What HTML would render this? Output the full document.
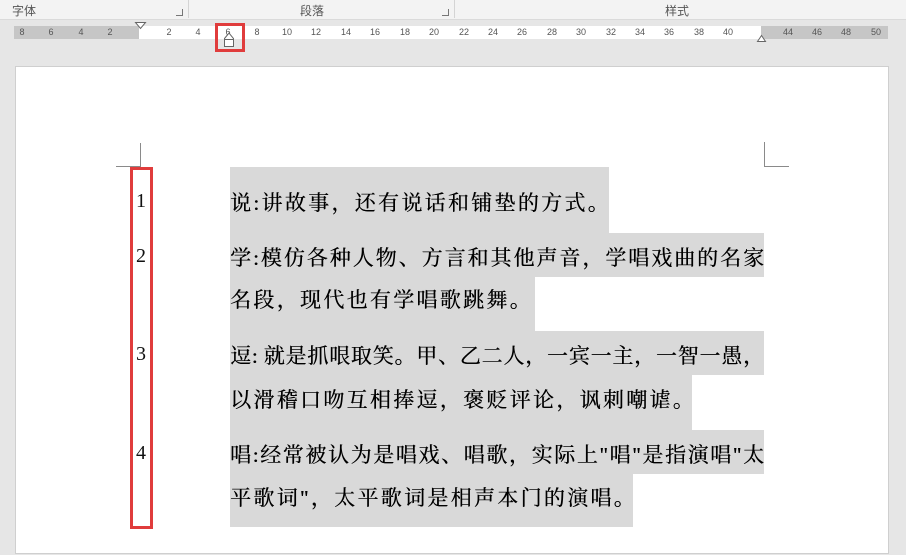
<!DOCTYPE html>
<html><head><meta charset="utf-8">
<style>
*{margin:0;padding:0;box-sizing:border-box}
body{width:906px;height:555px;background:#e6e6e6;position:relative;overflow:hidden;font-family:"Liberation Sans","Noto Sans CJK SC",sans-serif}
.hdr{position:absolute;left:0;top:0;width:906px;height:20px;background:#f3f3f3;border-bottom:1px solid #dadada}
.hl{position:absolute;top:2px;font-size:12px;color:#555}
.sep{position:absolute;top:0;width:1px;height:18px;background:#d4d4d4}
.dl{position:absolute;top:9px;width:7px;height:7px;border-right:1px solid #777;border-bottom:1px solid #777}
.ruler{position:absolute;left:14px;top:26px;width:874px;height:13px;background:#fff}
.g{position:absolute;top:0;height:13px;background:#c6c6c6}
.n{position:absolute;top:27px;font-size:9px;color:#555;transform:translateX(-50%)}
.page{position:absolute;left:15px;top:66px;width:874px;height:488px;background:#fff;border:1px solid #cfcfcf}
.hlb{position:absolute;background:#d9d9d9}
.ln{position:absolute;left:230px;width:534px;font-family:"Liberation Serif","Noto Serif CJK SC",serif;font-size:21px;color:#000;text-shadow:0.35px 0 0 #000;white-space:nowrap;line-height:26px;text-align:justify;text-align-last:justify}
.ln.e{text-align-last:left;letter-spacing:2.3px}
.num{position:absolute;left:136px;font-family:"Liberation Serif",serif;font-size:20px;color:#111}
.red{position:absolute;border:3px solid #e03c3c}
.cm{position:absolute;background:#8a8a8a}
</style></head><body>
<div class="hdr">
<span class="hl" style="left:12px">字体</span>
<span class="hl" style="left:300px">段落</span>
<span class="hl" style="left:665px">样式</span>
<div class="sep" style="left:188px"></div>
<div class="sep" style="left:454px"></div>
<div class="dl" style="left:176px"></div>
<div class="dl" style="left:442px"></div>
</div>
<div class="ruler">
<div class="g" style="left:0;width:125px"></div>
<div class="g" style="left:747px;width:127px"></div>
</div>
<span class="n" style="left:22px">8</span><span class="n" style="left:51px">6</span><span class="n" style="left:81px">4</span><span class="n" style="left:110px">2</span>
<span class="n" style="left:169px">2</span><span class="n" style="left:198px">4</span><span class="n" style="left:228px">6</span><span class="n" style="left:257px">8</span>
<span class="n" style="left:287px">10</span><span class="n" style="left:316px">12</span><span class="n" style="left:346px">14</span><span class="n" style="left:375px">16</span><span class="n" style="left:405px">18</span><span class="n" style="left:434px">20</span><span class="n" style="left:464px">22</span><span class="n" style="left:493px">24</span><span class="n" style="left:522px">26</span><span class="n" style="left:552px">28</span><span class="n" style="left:581px">30</span><span class="n" style="left:611px">32</span><span class="n" style="left:640px">34</span><span class="n" style="left:669px">36</span><span class="n" style="left:699px">38</span><span class="n" style="left:728px">40</span>
<span class="n" style="left:788px">44</span><span class="n" style="left:817px">46</span><span class="n" style="left:846px">48</span><span class="n" style="left:876px">50</span>
<svg style="position:absolute;left:0;top:0" width="906" height="60">
<path d="M135.5 22.5 L145.5 22.5 L140.5 28.5 Z" fill="#fff" stroke="#666"/>
<path d="M757.5 41.5 L761.5 35.5 L765.5 41.5 Z" fill="#fff" stroke="#666"/>
<path d="M224.5 38.5 L229 33 L233.5 38.5 L233.5 46.5 L224.5 46.5 Z M224.5 39.5 L233.5 39.5" fill="#fff" stroke="#666"/>
</svg>
<div class="red" style="left:215px;top:23px;width:30px;height:29px"></div>
<div class="page"></div>
<div class="cm" style="left:140px;top:143px;width:1px;height:24px"></div>
<div class="cm" style="left:116px;top:166px;width:24px;height:1px"></div>
<div class="cm" style="left:764px;top:142px;width:1px;height:24px"></div>
<div class="cm" style="left:764px;top:166px;width:25px;height:1px"></div>
<div class="hlb" style="left:230px;top:167px;width:379px;height:66px"></div>
<div class="hlb" style="left:230px;top:233px;width:534px;height:44px"></div>
<div class="hlb" style="left:230px;top:277px;width:305px;height:54px"></div>
<div class="hlb" style="left:230px;top:331px;width:534px;height:44px"></div>
<div class="hlb" style="left:230px;top:375px;width:462px;height:55px"></div>
<div class="hlb" style="left:230px;top:430px;width:534px;height:44px"></div>
<div class="hlb" style="left:230px;top:474px;width:403px;height:53px"></div>
<div class="ln e" style="top:190px">说:讲故事，还有说话和铺垫的方式。</div>
<div class="ln" style="top:245px">学:模仿各种人物、方言和其他声音，学唱戏曲的名家</div>
<div class="ln e" style="top:287px">名段，现代也有学唱歌跳舞。</div>
<div class="ln" style="top:343px">逗: 就是抓哏取笑。甲、乙二人，一宾一主，一智一愚，</div>
<div class="ln e" style="top:387px">以滑稽口吻互相捧逗，褒贬评论，讽刺嘲谑。</div>
<div class="ln" style="top:442px">唱:经常被认为是唱戏、唱歌，实际上"唱"是指演唱"太</div>
<div class="ln e" style="top:485px">平歌词"，太平歌词是相声本门的演唱。</div>
<div class="num" style="top:190px">1</div>
<div class="num" style="top:245px">2</div>
<div class="num" style="top:343px">3</div>
<div class="num" style="top:442px">4</div>
<div class="red" style="left:130px;top:167px;width:23px;height:362px"></div>
</body></html>
